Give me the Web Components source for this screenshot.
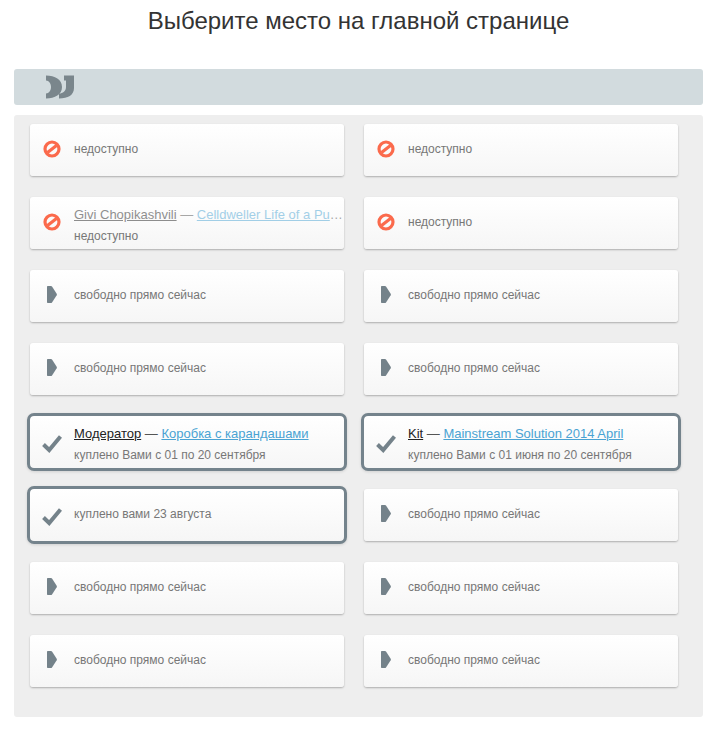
<!DOCTYPE html>
<html lang="ru">
<head>
<meta charset="utf-8">
<title>Выберите место</title>
<style>
body {
    margin: 0;
    background: #fff;
    font-family: "Liberation Sans", Arial, sans-serif;
}
</style>
</head>
<body>
<place-page>
    <span slot="heading">Выберите место на главной странице</span>
    <place-card state="busy">недоступно</place-card>
    <place-card state="busy">недоступно</place-card>
    <place-card state="busy" dim author="Givi Chopikashvili" track="Celldweller Life of a Purple">недоступно</place-card>
    <place-card state="busy">недоступно</place-card>
    <place-card>свободно прямо сейчас</place-card>
    <place-card>свободно прямо сейчас</place-card>
    <place-card>свободно прямо сейчас</place-card>
    <place-card>свободно прямо сейчас</place-card>
    <place-card state="bought" author="Модератор" track="Коробка с карандашами">куплено Вами с 01 по 20 сентября</place-card>
    <place-card state="bought" author="Kit" track="Mainstream Solution 2014 April">куплено Вами с 01 июня по 20 сентября</place-card>
    <place-card state="bought">куплено вами 23 августа</place-card>
    <place-card>свободно прямо сейчас</place-card>
    <place-card>свободно прямо сейчас</place-card>
    <place-card>свободно прямо сейчас</place-card>
    <place-card>свободно прямо сейчас</place-card>
    <place-card>свободно прямо сейчас</place-card>
</place-page>

<script>
const pageTemplate = document.createElement("template");
pageTemplate.innerHTML = `
<style>
:host {
    display: block;
    padding: 0 17px 0 14px;
}

h1 {
    margin: 0;
    height: 69px;
    padding-top: 6px;
    box-sizing: border-box;
    font-size: 24px;
    line-height: 29px;
    font-weight: normal;
    color: #333;
    text-align: center;
}

.bar {
    display: flex;
    align-items: center;
    height: 36px;
    padding-left: 32px;
    background-color: #d2dbde;
    border-radius: 3px;
}

.grid {
    display: grid;
    grid-template-columns: 314px 314px;
    grid-auto-rows: 52px;
    column-gap: 20px;
    row-gap: 21px;
    margin-top: 10px;
    padding: 9px 0 30px 16px;
    background-color: #eee;
    border-radius: 3px;
}
</style>
<h1><slot name="heading"></slot></h1>
<div class="bar">
    <svg width="28" height="24" viewBox="0 0 28 24" fill="#7a868c">
        <path d="M0 .5C9 .5 16 4.500 16 12C16 19.500 9 23.500 0 23.500V18.500C3 18.500 5 15.500 5 12C5 8.500 3 5.500 0 5.500Z"/>
        <path d="M18 .5H28V13C28 20 22 23.500 13 23.500V18.500C17 18.500 20 16 20 12V5.500H18Z"/>
    </svg>
</div>
<div class="grid"><slot></slot></div>
`;

class PlacePage extends HTMLElement {
    constructor() {
        super();
        this.attachShadow({mode: "open"});
        this.shadowRoot.appendChild(pageTemplate.content.cloneNode(true));
    }
}

const cardTemplate = document.createElement("template");
cardTemplate.innerHTML = `
<style>
:host {
    display: flex;
    align-items: center;
    min-width: 0;
    padding-right: 1px;
    background: linear-gradient(#fff, #f6f6f6);
    border-radius: 3px;
    box-shadow: 0 1px 2px rgba(0, 0, 0, .28);
    font-size: 12px;
    color: #777;
}

:host([state="bought"]) {
    outline: 3px solid #74838c;
    border-radius: 4px;
    box-shadow: 0 1px 3px 3px rgba(0, 0, 0, .12);
}

.icon {
    flex: 0 0 44px;
    display: flex;
    align-items: center;
    justify-content: center;
    padding: 0 1px 3px 0;
    box-sizing: border-box;
}

:host([state="bought"]) .icon {
    padding: 4px 0 0 0;
}

.text {
    flex: 1;
    min-width: 0;
    margin-top: -1px;
}

.text.both {
    margin-top: 4px;
}

.title {
    white-space: nowrap;
    overflow: hidden;
    text-overflow: ellipsis;
    line-height: 15px;
    margin-bottom: 7px;
    font-size: 13px;
    color: #555;
}

:host([dim]) .title {
    opacity: .5;
}

.title a {
    color: #4aa3d3;
    text-decoration: underline;
}

.title a.author {
    color: #222;
}

.status {
    line-height: 15px;
}
</style>
<div class="icon"></div>
<div class="text">
    <div class="title" hidden><a class="author" href="#"></a> — <a class="track" href="#"></a></div>
    <div class="status"><slot></slot></div>
</div>
`;

const icons = {
    free: `<svg width="10" height="17" viewBox="0 0 10 17" fill="#74828a"><path d="M1 0H4C4.400 0 4.700 .2 5 .6L9.700 7.700C10 8.200 10 8.800 9.700 9.300L5 16.400C4.700 16.800 4.400 17 4 17H1C.4 17 0 16.600 0 16V1C0 .4 .4 0 1 0Z"/></svg>`,
    busy: `<svg width="18" height="18" viewBox="0 0 18 18" fill="none" stroke="#fb6a4c" stroke-width="3.200"><circle cx="9" cy="9" r="7"/><path d="M4.500 12.500L13.500 5.500"/></svg>`,
    bought: `<svg width="20" height="18" viewBox="0 0 20 18" fill="none" stroke="#74828a" stroke-width="4"><path d="M1.500 9.500L7.200 15L18.500 1.500"/></svg>`
};

class PlaceCard extends HTMLElement {
    constructor() {
        super();
        this.attachShadow({mode: "open"});
        this.shadowRoot.appendChild(cardTemplate.content.cloneNode(true));
    }

    connectedCallback() {
        const state = this.getAttribute("state") || "free";
        this.shadowRoot.querySelector(".icon").innerHTML = icons[state];

        if(this.hasAttribute("author")) {
            this.shadowRoot.querySelector(".text").classList.add("both");
            this.shadowRoot.querySelector(".title").hidden = false;
            this.shadowRoot.querySelector(".author").textContent = this.getAttribute("author");
            this.shadowRoot.querySelector(".track").textContent = this.getAttribute("track");
        }
    }
}

customElements.define("place-page", PlacePage);
customElements.define("place-card", PlaceCard);
</script>
</body>
</html>
